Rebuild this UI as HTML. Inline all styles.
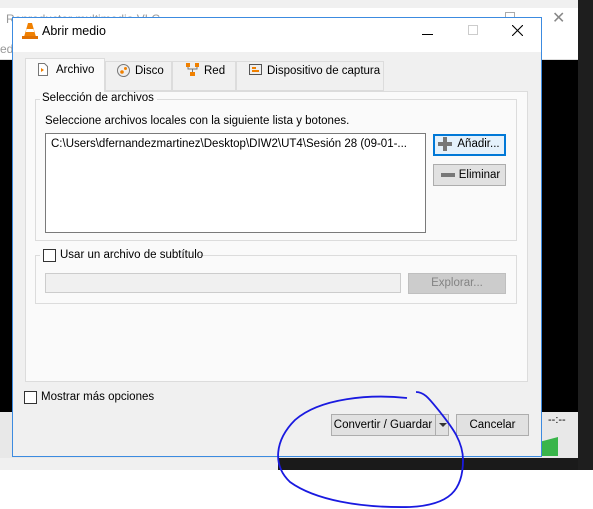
<!DOCTYPE html>
<html><head><meta charset="utf-8"><style>
*{box-sizing:border-box;margin:0;padding:0}
body{width:593px;height:509px;position:relative;overflow:hidden;background:#fff;font-family:"Liberation Sans",sans-serif;font-size:11.5px;color:#000}
.a{position:absolute}
.btn{position:absolute;background:#e1e1e1;border:1px solid #adadad;text-align:center;line-height:18px;font-size:11.5px}
.gb{position:absolute;border:1px solid #dcdcdc}
.cb{position:absolute;width:13px;height:13px;border:1px solid #333;background:#fff}
</style></head><body>
<div class="a" style="left:0;top:0;width:593px;height:8px;background:#f0f0f0"></div>
<div class="a" style="left:0;top:8px;width:578px;height:52px;background:#fff;border-bottom:1px solid #ddd"></div>
<div class="a" style="left:6px;top:12px;color:#999;font-size:12px">Reproductor multimedia VLC</div>
<div class="a" style="left:0;top:42px;color:#999;font-size:12px">edi</div>
<div class="a" style="left:505px;top:12px;width:10px;height:10px;border:1px solid #aaa"></div>
<div class="a" style="left:552px;top:8px;color:#888;font-size:16px">✕</div>
<div class="a" style="left:578px;top:0;width:15px;height:470px;background:#1e1e1e"></div>
<div class="a" style="left:0;top:60px;width:578px;height:352px;background:#000"></div>
<div class="a" style="left:0;top:412px;width:578px;height:58px;background:#e8e8e8"></div>
<div class="a" style="left:0;top:458px;width:278px;height:12px;background:#f0f0f0"></div>
<div class="a" style="left:278px;top:458px;width:300px;height:12px;background:#1a1a1a"></div>
<div class="a" style="left:548px;top:414px;font-size:11px">--:--</div>
<div class="a" style="left:486px;top:437px;width:0;height:0;border-left:72px solid transparent;border-bottom:19px solid #39b54a"></div>
<div class="a" style="left:12px;top:17px;width:530px;height:440px;border:1px solid #3c8be0;background:#f0f0f0"></div>
<div class="a" style="left:13px;top:18px;width:528px;height:34px;background:#fff"></div>
<svg class="a" style="left:22px;top:22px" width="16" height="18" viewBox="0 0 16 18"><path d="M6 1h4l4 14H2z" fill="#f08000"/><path d="M4.5 7h7l.7 3H3.8z M3.3 12h9.4" fill="#fff"/><rect x="0" y="14" width="16" height="3" fill="#e07000"/></svg>
<div class="a" style="left:42px;top:24px;font-size:12.5px">Abrir medio</div>
<div class="a" style="left:422px;top:34px;width:11px;height:1px;background:#000"></div>
<div class="a" style="left:468px;top:25px;width:10px;height:10px;border:1px solid #ccc"></div>
<svg class="a" style="left:512px;top:25px" width="11" height="11"><path d="M0 0L11 11M11 0L0 11" stroke="#000" stroke-width="1.1"/></svg>
<div class="a" style="left:25px;top:91px;width:503px;height:291px;background:#fafafa;border:1px solid #dcdcdc"></div>
<div class="a" style="left:25px;top:58px;width:80px;height:34px;background:#fafafa;border:1px solid #dcdcdc;border-bottom:none"></div>
<div class="a" style="left:105px;top:61px;width:67px;height:30px;background:#f0f0f0;border:1px solid #dcdcdc"></div>
<div class="a" style="left:172px;top:61px;width:64px;height:30px;background:#f0f0f0;border:1px solid #dcdcdc"></div>
<div class="a" style="left:236px;top:61px;width:148px;height:30px;background:#f0f0f0;border:1px solid #dcdcdc"></div>
<svg class="a" style="left:38px;top:63px" width="10" height="13"><path d="M.5.5h6l3 3v9H.5z" fill="#fff" stroke="#777"/><path d="M3 5l3 2-3 2z" fill="#f08000"/></svg>
<div class="a" style="left:56px;top:64px">Archivo</div>
<svg class="a" style="left:117px;top:64px" width="13" height="13"><circle cx="6.5" cy="6.5" r="6" fill="#eee" stroke="#777"/><circle cx="5" cy="8" r="1.8" fill="#f08000"/><circle cx="8.5" cy="4.5" r="1.5" fill="#f08000"/></svg>
<div class="a" style="left:135px;top:65px">Disco</div>
<svg class="a" style="left:186px;top:63px" width="13" height="13"><rect x="0" y="0" width="4" height="4" fill="#f08000"/><rect x="9" y="0" width="4" height="4" fill="#f08000"/><rect x="4" y="9" width="5" height="4" fill="#f08000"/><path d="M2 4v2h9V4M6.5 6v3" stroke="#777" fill="none"/></svg>
<div class="a" style="left:204px;top:65px">Red</div>
<svg class="a" style="left:249px;top:64px" width="14" height="12"><rect x=".5" y=".5" width="12" height="10" fill="#eee" stroke="#555"/><rect x="3" y="3" width="4" height="2" fill="#f08000"/><rect x="3" y="6" width="7" height="2" fill="#f08000"/></svg>
<div class="a" style="left:267px;top:65px">Dispositivo de captura</div>
<div class="gb" style="left:35px;top:99px;width:482px;height:142px"></div>
<div class="a" style="left:40px;top:92px;background:#fafafa;padding:0 3px 0 2px">Selección de archivos</div>
<div class="a" style="left:45px;top:115px">Seleccione archivos locales con la siguiente lista y botones.</div>
<div class="a" style="left:45px;top:133px;width:381px;height:100px;background:#fff;border:1px solid #7a7a7a"></div>
<div class="a" style="left:51px;top:138px;white-space:nowrap">C:\Users\dfernandezmartinez\Desktop\DIW2\UT4\Sesión 28 (09-01-...</div>
<div class="btn" style="left:433px;top:134px;width:73px;height:22px;border:2px solid #0078d7;background:#e5f1fb;line-height:17px;padding-left:18px">Añadir...</div>
<div class="a" style="left:438px;top:142px;width:14px;height:4px;background:#777"></div>
<div class="a" style="left:443px;top:137px;width:4px;height:14px;background:#777"></div>
<div class="btn" style="left:433px;top:164px;width:73px;height:22px;line-height:20px;padding-left:20px">Eliminar</div>
<div class="a" style="left:441px;top:173px;width:14px;height:4px;background:#777"></div>
<div class="gb" style="left:35px;top:255px;width:482px;height:49px"></div>
<div class="a" style="left:40px;top:248px;width:160px;height:14px;background:#fafafa"></div>
<div class="cb" style="left:43px;top:249px"></div>
<div class="a" style="left:60px;top:249px">Usar un archivo de subtítulo</div>
<div class="a" style="left:45px;top:273px;width:356px;height:20px;background:#f0f0f0;border:1px solid #ccc"></div>
<div class="btn" style="left:408px;top:273px;width:98px;height:21px;background:#ccc;border-color:#bfbfbf;color:#838383">Explorar...</div>
<div class="cb" style="left:24px;top:391px"></div>
<div class="a" style="left:41px;top:391px">Mostrar más opciones</div>
<div class="btn" style="left:331px;top:414px;width:118px;height:22px;line-height:20px;padding-right:14px">Convertir / Guardar</div>
<div class="a" style="left:435px;top:415px;width:1px;height:20px;background:#adadad"></div>
<div class="a" style="left:439px;top:423px;width:0;height:0;border-left:4px solid transparent;border-right:4px solid transparent;border-top:4px solid #333"></div>
<div class="btn" style="left:456px;top:414px;width:73px;height:22px;line-height:20px">Cancelar</div>
<svg class="a" style="left:0;top:0" width="593" height="509"><path d="M407 398C370 394 320 398 295 420C275 440 272 465 290 482C315 500 360 508 410 507C450 505 463 490 463 460C463 440 450 425 440 412C430 400 425 392 416 392" fill="none" stroke="#1a1ae0" stroke-width="1.8"/></svg>
</body></html>
